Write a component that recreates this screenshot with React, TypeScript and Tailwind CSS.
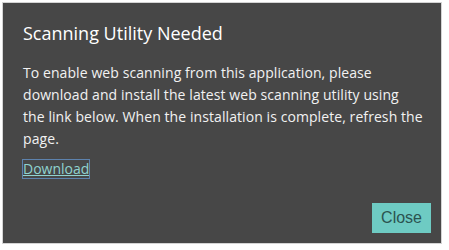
import React from "react";

export default function App() {
  return (
    <div className="w-[449px] h-[250px] bg-white p-[2px] pr-[7px] pb-[6px]">
      <div
        className="w-full h-full border border-[#d4d4d4] bg-[#474747] flex flex-col pl-[20px] pr-[10px] pt-[17px] pb-[10px]"
        style={{ fontFamily: '"Open Sans", "Noto Sans", sans-serif' }}
      >
        <h1 className="text-[18px] leading-[26px] text-white">Scanning Utility Needed</h1>
        <p className="mt-[16px] text-[14px] leading-[22px] text-[#f2f2f2] tracking-[0.08px] whitespace-nowrap">
          To enable web scanning from this application, please
          <br />
          download and install the latest web scanning utility using
          <br />
          the link below. When the installation is complete, refresh the
          <br />
          page.
        </p>
        <div className="mt-[6px]">
          <a href="#" className="inline-block text-[14px] leading-[18px] text-[#8fd3d0] underline outline outline-1 outline-[#5d82ad]">
            Download
          </a>
        </div>
        <div className="flex-1" />
        <div className="flex justify-end">
          <button
            className="bg-[#6ecbc3] text-[#2b5350] text-[16px] leading-[20px] px-[9px] py-[5px]"
            style={{ fontFamily: '"Liberation Sans", Arial, sans-serif' }}
          >
            Close
          </button>
        </div>
      </div>
    </div>
  );
}
